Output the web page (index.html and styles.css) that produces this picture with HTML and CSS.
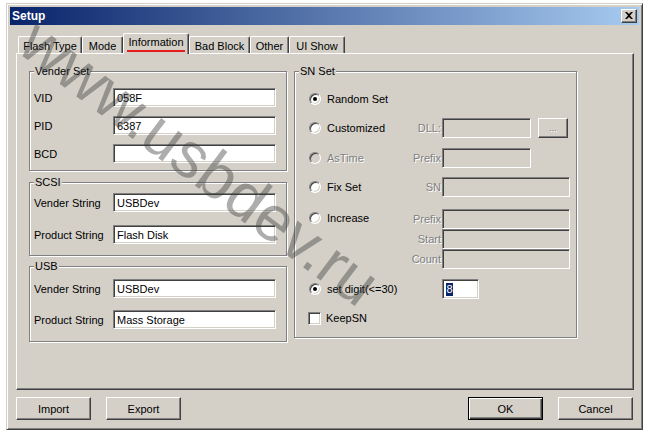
FILE: index.html
```html
<!DOCTYPE html>
<html lang="en">
  <head>
    <meta charset="UTF-8" />
    <title>Setup</title>
    <link rel="stylesheet" href="styles.css">
  </head>
  <body>
    <div class="window">
      <div class="titlebar">
        <span class="title">Setup</span>
        <span class="close-btn">
          <svg width="8" height="7" viewBox="0 0 8 7">
            <path d="M0 0h2l2 2 2-2h2L5 3.5 8 7H6L4 5 2 7H0l3-3.5z" fill="#000" />
          </svg>
        </span>
      </div>

      <div class="content">
        <div class="tabs">
          <div class="tab" style="width: 64px">Flash Type</div>
          <div class="tab" style="width: 41px">Mode</div>
          <div class="tab active" style="width: 66px"><span class="focus">Information</span></div>
          <div class="tab" style="width: 61px">Bad Block</div>
          <div class="tab" style="width: 39px">Other</div>
          <div class="tab" style="width: 56px">UI Show</div>
        </div>

        <div class="panel">
          <div class="col-left">
            <div class="group vender">
              <span class="legend">Vender Set</span>
              <div class="row"><span class="label">VID</span><div class="edit">058F</div></div>
              <div class="row"><span class="label">PID</span><div class="edit">6387</div></div>
              <div class="row"><span class="label">BCD</span><div class="edit"></div></div>
            </div>
            <div class="group scsi">
              <span class="legend">SCSI</span>
              <div class="row"><span class="label">Vender String</span><div class="edit">USBDev</div></div>
              <div class="row"><span class="label">Product String</span><div class="edit">Flash Disk</div></div>
            </div>
            <div class="group usb">
              <span class="legend">USB</span>
              <div class="row"><span class="label">Vender String</span><div class="edit">USBDev</div></div>
              <div class="row"><span class="label">Product String</span><div class="edit">Mass Storage</div></div>
            </div>
          </div>

          <div class="group sn">
            <span class="legend">SN Set</span>
            <div class="sn-row r1">
              <div class="opt"><span class="radio checked"></span>Random Set</div>
            </div>
            <div class="sn-row r2">
              <div class="opt"><span class="radio"></span>Customized</div>
              <span class="flabel">DLL:</span><div class="edit off w89"></div>
              <div class="btn dots">...</div>
            </div>
            <div class="sn-row r3">
              <div class="opt disabled"><span class="radio"></span>AsTime</div>
              <span class="flabel">Prefix</span><div class="edit off w89"></div>
            </div>
            <div class="sn-row r4">
              <div class="opt"><span class="radio"></span>Fix Set</div>
              <span class="flabel">SN</span><div class="edit off w128"></div>
            </div>
            <div class="sn-row r5">
              <div class="opt up"><span class="radio"></span>Increase</div>
              <span class="flabel">Prefix</span><div class="edit off w128"></div>
            </div>
            <div class="sn-row">
              <div class="opt"></div>
              <span class="flabel">Start</span><div class="edit off w128"></div>
            </div>
            <div class="sn-row">
              <div class="opt"></div>
              <span class="flabel">Count</span><div class="edit off w128"></div>
            </div>
            <div class="sn-row r6">
              <div class="opt wide"><span class="radio checked"></span>set digit(&lt;=30)</div>
              <div class="edit w37"><span class="sel">8</span></div>
            </div>
            <div class="sn-row r7">
              <div class="opt"><span class="check"></span>KeepSN</div>
            </div>
          </div>
        </div>

        <div class="buttons">
          <div class="btn-group">
            <div class="btn">Import</div>
            <div class="btn">Export</div>
          </div>
          <div class="btn-group">
            <div class="btn default">OK</div>
            <div class="btn">Cancel</div>
          </div>
        </div>
      </div>

      <div class="watermark">www.usbdev.ru</div>
    </div>
  </body>
</html>
```

FILE: styles.css
```css
* {
  margin: 0;
  padding: 0;
  box-sizing: border-box;
}
body {
  background: #fff;
  font-family: "Liberation Sans", Arial, sans-serif;
  font-size: 11px;
  color: #000;
}

.window {
  position: relative;
  overflow: hidden;
  margin: 3px 0 0 6px;
  width: 637px;
  height: 427px;
  background: #d4d0c8;
  border: 1px solid;
  border-color: #d4d0c8 #404040 #404040 #d4d0c8;
  box-shadow: inset 1px 1px #fff, inset -1px -1px #808080;
  padding: 3px;
}

.titlebar {
  height: 18px;
  background: linear-gradient(to right, #0a246a, #a6caf0);
  display: flex;
  align-items: center;
  justify-content: space-between;
  padding: 0 2px 0 2px;
}
.title {
  color: #fff;
  font-weight: bold;
  font-size: 12px;
}
.close-btn {
  width: 16px;
  height: 14px;
  background: #d4d0c8;
  border: 1px solid;
  border-color: #fff #404040 #404040 #fff;
  box-shadow: inset -1px -1px #808080;
  display: flex;
  align-items: center;
  justify-content: center;
  padding-bottom: 1px;
}

.content {
  padding: 8px 0 0 6px;
}

.tabs {
  display: flex;
  align-items: flex-end;
  height: 20px;
  padding-left: 2px;
}
.tab {
  height: 17px;
  border-top: 1px solid #fff;
  border-left: 1px solid #fff;
  border-right: 1px solid #404040;
  border-radius: 2px 2px 0 0;
  box-shadow: inset -1px 0 #808080;
  display: flex;
  align-items: center;
  justify-content: center;
  padding-top: 2px;
}
.tab.active {
  height: 21px;
  margin-bottom: -1px;
  background: #d4d0c8;
  position: relative;
  z-index: 1;
  align-items: flex-start;
  padding-top: 2px;
}
.focus {
  border-bottom: 2px solid #e41c1c;
  padding: 0 1px 1px;
  line-height: 13px;
}

.panel {
  width: 618px;
  height: 337px;
  border: 1px solid;
  border-color: #fff #404040 #404040 #fff;
  box-shadow: inset -1px -1px #808080;
  display: flex;
  gap: 7px;
  padding: 17px 0 0 12px;
}

.col-left {
  width: 258px;
  display: flex;
  flex-direction: column;
}

.group {
  position: relative;
  border: 1px solid #808080;
  box-shadow: inset 1px 1px #fff, 1px 1px #fff;
}
.legend {
  position: absolute;
  top: -8px;
  left: 4px;
  padding: 0 1px;
  background: #d4d0c8;
  line-height: 14px;
}

.vender {
  height: 100px;
  padding: 16px 0 0 4px;
  display: flex;
  flex-direction: column;
  gap: 9px;
}
.scsi {
  height: 74px;
  margin-top: 11px;
  padding: 10px 0 0 4px;
  display: flex;
  flex-direction: column;
  gap: 13px;
}
.usb {
  height: 76px;
  margin-top: 10px;
  padding: 12px 0 0 4px;
  display: flex;
  flex-direction: column;
  gap: 12px;
}

.row {
  display: flex;
  align-items: center;
  height: 19px;
}
.label {
  width: 79px;
}
.row .edit {
  width: 163px;
  height: 19px;
}

.edit {
  height: 20px;
  background: #fff;
  border: 1px solid;
  border-color: #808080 #fff #fff #808080;
  box-shadow: inset 1px 1px #404040, inset -1px -1px #d4d0c8;
  padding: 0 3px;
  display: flex;
  align-items: center;
}
.edit.off {
  background: #d4d0c8;
}
.w89 { width: 89px; }
.w128 { width: 128px; }
.w37 { width: 37px; }

.sel {
  background: #0a246a;
  color: #fff;
  line-height: 13px;
  padding: 0 0.5px;
}

.sn {
  width: 283px;
  height: 267px;
  padding: 17px 0 0 14px;
}
.sn-row {
  display: flex;
  align-items: center;
  height: 20px;
}
.r2 { margin-top: 9px; }
.r3 { margin-top: 10px; }
.r4 { margin-top: 9px; }
.r5 { margin-top: 12px; }
.r6 { margin-top: 10px; }
.r7 { margin-top: 9px; }

.opt {
  width: 101px;
  display: flex;
  align-items: center;
}
.opt.up {
  margin-top: -3px;
}
.opt.wide {
  width: 133px;
}
.opt.disabled {
  color: #808080;
  text-shadow: 1px 1px #fff;
}
.flabel {
  width: 32px;
  padding-right: 1px;
  text-align: right;
  color: #808080;
  text-shadow: 1px 1px #fff;
}

.radio {
  position: relative;
  width: 12px;
  height: 12px;
  margin-right: 6px;
  border-radius: 50%;
  border: 1px solid;
  border-color: #808080 #fff #fff #808080;
  box-shadow: inset 1px 1px #404040, inset -1px -1px #d4d0c8;
  background: #fff;
}
.disabled .radio {
  background: #d4d0c8;
}
.radio.checked::after {
  content: "";
  position: absolute;
  left: 3px;
  top: 3px;
  width: 4px;
  height: 4px;
  border-radius: 50%;
  background: #000;
}
.check {
  width: 13px;
  height: 13px;
  margin: 0 5px 0 -1px;
  background: #fff;
  border: 1px solid;
  border-color: #808080 #fff #fff #808080;
  box-shadow: inset 1px 1px #404040, inset -1px -1px #d4d0c8;
}

.btn {
  width: 75px;
  height: 23px;
  background: #d4d0c8;
  border: 1px solid;
  border-color: #fff #404040 #404040 #fff;
  box-shadow: inset -1px -1px #808080;
  display: flex;
  align-items: center;
  justify-content: center;
}
.btn.default {
  border-color: #000;
  box-shadow: inset 1px 1px #fff, inset -1px -1px #404040, inset -2px -2px #808080;
}
.btn.dots {
  width: 30px;
  height: 20px;
  margin-left: 7px;
  color: #808080;
  text-shadow: 1px 1px #fff;
  font-size: 9px;
}

.buttons {
  width: 618px;
  margin-top: 7px;
  display: flex;
  justify-content: space-between;
  padding-right: 1px;
}
.btn-group {
  display: flex;
  gap: 15px;
}

.watermark {
  position: absolute;
  left: 193px;
  top: 158px;
  transform: translate(-50%, -50%) rotate(37deg);
  font-size: 64px;
  white-space: nowrap;
  color: rgba(60, 60, 60, 0.42);
  pointer-events: none;
}
```
